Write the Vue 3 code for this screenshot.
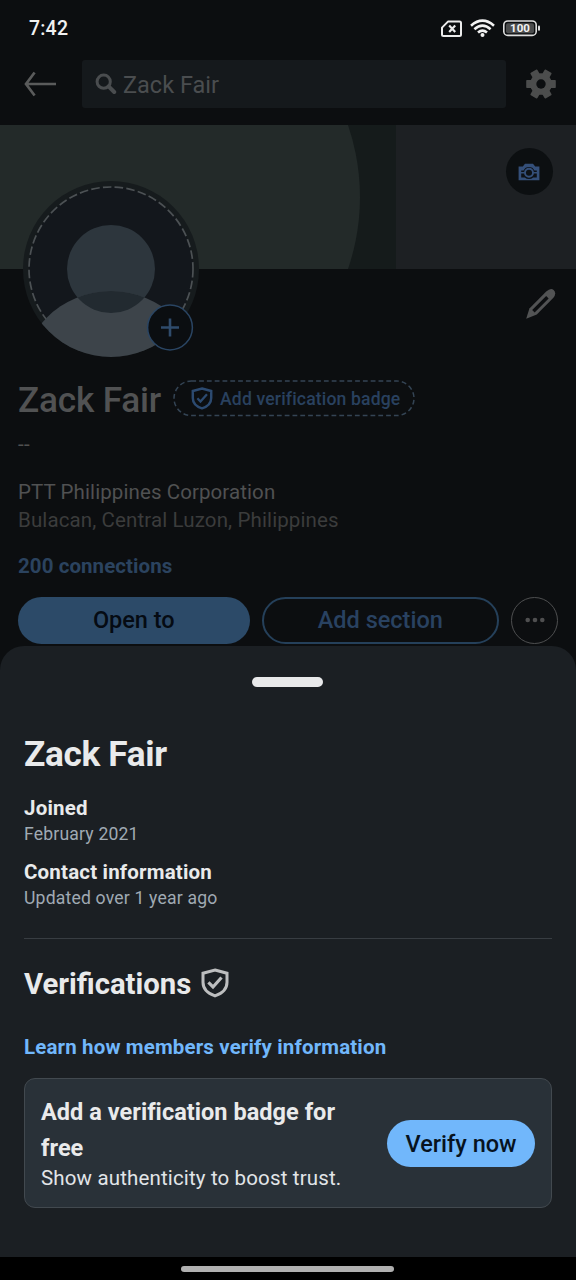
<script setup>
const facts = [
  { label: 'Joined', value: 'February 2021', key: 'joined' },
  { label: 'Contact information', value: 'Updated over 1 year ago', key: 'contact' },
]
const teeth = [0, 60, 120]
</script>

<template>
  <div class="screen">
    <div class="status">
      <span class="clock">7:42</span>
      <svg class="status-icons" width="102" height="22" viewBox="0 0 102 22" fill="none">
        <path d="M8.2 4.4H19.5Q21 4.4 21 5.9V17.5Q21 19 19.5 19H3.5Q2 19 2 17.5V10.6Z" stroke="#ececec" stroke-width="2" stroke-linejoin="round" />
        <path d="M9.2 8.6L15.2 15M15.2 8.6L9.2 15" stroke="#ececec" stroke-width="2.2" />
        <g stroke="#f2f2f2" stroke-width="2.6">
          <path d="M31 8.7Q42.5 -1.3 54 8.7" />
          <path d="M34.4 12.2Q42.5 5.2 50.6 12.2" />
          <path d="M38 15.5Q42.5 11.6 47 15.5" />
        </g>
        <circle cx="42.5" cy="18" r="2" fill="#f2f2f2" />
        <rect x="63.8" y="4" width="32.4" height="14.4" rx="4" stroke="#dedede" stroke-width="1.6" />
        <rect x="66" y="6.2" width="28" height="10" rx="2" fill="#4b4c4d" />
        <rect x="98" y="8.4" width="2" height="5.4" rx="1" fill="#dedede" />
        <text x="80" y="15.4" text-anchor="middle" class="battery">100</text>
      </svg>
    </div>

    <header class="topbar">
      <svg class="back" width="34" height="26" viewBox="0 0 34 26" fill="none" stroke="#5a5b5b" stroke-width="2.7">
        <path d="M33 13H3.2M11.6 1.5L3 13L11.6 24.5" />
      </svg>
      <div class="search">
        <svg width="22" height="22" viewBox="0 0 22 22" fill="none" stroke="#4a4d4f">
          <circle cx="8.7" cy="8.7" r="6.6" stroke-width="3" />
          <path d="M13.6 13.4L19.2 19" stroke-width="4" stroke-linecap="round" />
        </svg>
        <span>Zack Fair</span>
      </div>
      <svg class="gear" width="30" height="30" viewBox="-15 -15 30 30" fill="#4c4d4d">
        <circle r="10.8" />
        <rect v-for="a in teeth" :key="a" x="-14.8" y="-4" width="29.6" height="8" rx=".8" :transform="`rotate(${a})`" />
        <circle r="4.7" fill="#0c0e10" />
      </svg>
    </header>

    <section class="cover">
      <svg class="art" width="576" height="144" viewBox="0 0 576 144">
        <rect width="576" height="144" fill="#1d2023" />
        <rect width="396" height="144" fill="#151b1b" />
        <circle cx="138" cy="72" r="222" fill="#232a29" />
      </svg>
      <div class="camera">
        <svg width="22" height="18" viewBox="0 0 22 18">
          <path fill="#344f79" d="M.6 3.6H4.8L7 .8H15L17.2 3.6H21.4V17.2H.6Z" />
          <path fill="#0d1116" d="M3.2 7.4H5.6A6 6 0 0 1 16.4 7.4H18.8V9H3.2ZM3.2 10.4H18.8V14.4H15.2A6 6 0 0 1 6.8 14.4H3.2Z" />
          <circle cx="11" cy="9.8" r="4" fill="#0d1116" stroke="#344f79" stroke-width="1.9" />
        </svg>
      </div>
      <svg class="avatar" width="178" height="178" viewBox="-89 -89 178 178">
        <defs>
          <clipPath id="disc"><circle r="88" /></clipPath>
          <clipPath id="head"><circle r="44" /></clipPath>
        </defs>
        <circle r="88" fill="#161b1d" />
        <circle r="82" fill="#13171c" stroke="#4c5154" stroke-width="1.7" stroke-dasharray="8.6 3.2" />
        <circle r="44" fill="#2d363d" />
        <circle cy="113" r="91" fill="#3d444a" clip-path="url(#disc)" />
        <circle cy="113" r="91" fill="#222a30" clip-path="url(#head)" />
        <circle cx="59" cy="58.5" r="22.4" fill="#0b0e11" stroke="#2a4563" stroke-width="1.5" />
        <path d="M50 58.5H68M59 49.5V67.5" stroke="#2f4b6b" stroke-width="2.6" />
      </svg>
    </section>

    <main class="profile">
      <svg class="pencil" width="32" height="32" viewBox="0 0 32 32">
        <path fill="#525354" d="M1.2 30.8L4.4 20.4L21.2 3.6Q25.6 -.4 28.6 2Q32 5.2 28.2 10L11.8 26.6Z" />
        <path d="M8.4 23.2L22.4 9.2" stroke="#0c0e10" stroke-width="3.4" />
      </svg>
      <div class="name-row">
        <h1>Zack Fair</h1>
        <div class="badge">
          <svg class="outline" width="242" height="37" viewBox="0 0 242 37" fill="none">
            <rect x="1" y="1" width="240" height="34.6" rx="17.3" stroke="#344454" stroke-width="1.5" stroke-dasharray="4.8 3" />
          </svg>
          <svg width="22" height="23" viewBox="0 0 28 30" fill="none" stroke="#2c4a70">
            <path d="M14 2L26 5.2V14.2Q26 23.8 14 27.8Q2 23.8 2 14.2V5.2Z" stroke-width="3.2" />
            <path d="M8 14.7L12 19L20.5 9.5" stroke-width="3" />
          </svg>
          <span>Add verification badge</span>
        </div>
      </div>
      <p class="headline">--</p>
      <p class="company">PTT Philippines Corporation</p>
      <p class="place">Bulacan, Central Luzon, Philippines</p>
      <p class="connections">200 connections</p>
      <div class="actions">
        <button class="open"><span>Open to</span></button>
        <button class="add"><span>Add section</span></button>
        <button class="more">
          <svg width="20" height="6" viewBox="0 0 20 6" fill="#4f4f50"><circle cx="2.7" cy="3" r="2.3" /><circle cx="10" cy="3" r="2.3" /><circle cx="17.3" cy="3" r="2.3" /></svg>
        </button>
      </div>
    </main>

    <section class="sheet">
      <div class="handle"></div>
      <h2>Zack Fair</h2>
      <dl>
        <div v-for="fact in facts" :key="fact.key" class="fact">
          <dt>{{ fact.label }}</dt>
          <dd>{{ fact.value }}</dd>
        </div>
      </dl>
      <div class="rule"></div>
      <div class="verify-head">
        <h3>Verifications</h3>
        <svg width="28" height="30" viewBox="0 0 28 30" fill="none" stroke="#bdbebf">
          <path d="M14 2L26 5.2V14.2Q26 23.8 14 27.8Q2 23.8 2 14.2V5.2Z" stroke-width="3" />
          <path d="M7.4 14.4L12 19L20.5 9.5" stroke-width="3.2" />
        </svg>
      </div>
      <a class="learn">Learn how members verify information</a>
      <div class="card">
        <div class="copy">
          <h4>Add a verification badge for free</h4>
          <p>Show authenticity to boost trust.</p>
        </div>
        <button class="verify"><span>Verify now</span></button>
      </div>
    </section>
    <div class="nav"><i></i></div>
  </div>
</template>

<style>
body { margin: 0; background: #0c0e10; }
</style>

<style scoped>
.screen { position: relative; width: 576px; height: 1280px; overflow: hidden; background: #0c0e10; font-family: Roboto, "Noto Sans", sans-serif; white-space: nowrap; }
h1, h2, h3, h4, p, dl, dd { margin: 0; }
button { border: 0; margin: 0; padding: 0; font: inherit; box-sizing: border-box; display: flex; align-items: center; justify-content: center; }
svg { display: block; flex: none; }
.status { height: 60px; display: flex; justify-content: space-between; padding: 0 34px 0 29px; box-sizing: border-box; }
.clock { margin-top: 17px; font-size: 19.5px; line-height: 24px; font-weight: 500; letter-spacing: .2px; color: #f1f1f1; }
.status-icons { margin-top: 16.5px; }
.battery { font: 700 11.5px Roboto, sans-serif; fill: #f2f2f2; }
.topbar { height: 65px; display: flex; align-items: flex-start; padding-left: 23px; box-sizing: border-box; }
.back { margin-top: 11px; }
.search { margin-left: 25px; width: 424px; height: 48px; border-radius: 3px; background: #15191c; display: flex; align-items: center; box-sizing: border-box; padding-left: 13px; gap: 6px; color: #4a4d4f; font-size: 23.5px; line-height: 48px; }
.search span { padding-top: 1px; }
.gear { margin: 9px 0 0 20px; }
.cover { position: relative; height: 144px; }
.camera { position: absolute; left: 505.5px; top: 23px; width: 47px; height: 47px; border-radius: 50%; background: #0c0f11; display: flex; align-items: center; justify-content: center; }
.avatar { position: absolute; left: 22px; top: 55px; }
.profile { padding: 19px 18px 0; }
.pencil { margin: 0 0 0 507px; }
.name-row { display: flex; align-items: center; margin-top: 58px; height: 44px; }
h1 { font-size: 35.2px; line-height: 44px; font-weight: 500; color: #515253; width: 155px; letter-spacing: -.2px; }
.badge { position: relative; width: 242px; height: 37px; display: flex; align-items: center; box-sizing: border-box; padding-left: 18px; gap: 7px; color: #29415f; font-size: 17.6px; font-weight: 500; letter-spacing: .15px; top: -2px; }
.badge span { padding-top: 2px; }
.outline { position: absolute; left: 0; top: 0; }
.headline { margin-top: 7px; font-size: 20.5px; line-height: 30px; color: #505050; letter-spacing: .3px; }
.company { margin-top: 19px; font-size: 20.5px; line-height: 28px; letter-spacing: .09px; color: #505152; }
.place { font-size: 20.5px; line-height: 28px; letter-spacing: .12px; color: #3b3c3c; }
.connections { margin-top: 18px; font-size: 20.5px; line-height: 28px; font-weight: 700; letter-spacing: .07px; color: #2b435f; }
.actions { display: flex; margin-top: 16.5px; height: 47px; }
.actions button { height: 47px; border-radius: 24px; font-size: 23.5px; font-weight: 500; }
.actions .open { width: 232px; background: #2c4a68; color: #050b13; }
.actions .add { width: 238px; margin-left: 12px; background: none; border: 2px solid #25405a; color: #294261; }
.actions .more { width: 47px; margin-left: 12px; background: none; border: 1.5px solid #4e4f50; }
.sheet { position: absolute; left: 0; right: 0; top: 646px; height: 611px; border-radius: 24px 24px 0 0; background: #1b1f23; padding: 31px 24px 0; box-sizing: border-box; color: #e9eaeb; }
.handle { width: 71px; height: 10px; border-radius: 5px; background: #e8e9ea; margin: 0 auto; position: relative; left: -.5px; }
h2 { margin-top: 45px; font-size: 35.2px; line-height: 44px; font-weight: 700; letter-spacing: -.35px; }
dl { margin-top: 18px; }
.fact { height: 64px; }
dt { font-size: 20.5px; line-height: 28px; font-weight: 700; letter-spacing: .18px; }
dd { font-size: 17.6px; line-height: 24px; letter-spacing: .18px; color: #a0aab3; }
.rule { height: 1px; background: #383d42; margin-top: 16px; }
.verify-head { display: flex; align-items: center; margin-top: 26px; height: 38px; gap: 10px; }
.verify-head svg { position: relative; top: -1px; }
h3 { font-size: 29.3px; line-height: 38px; font-weight: 700; }
.learn { display: block; margin-top: 29px; font-size: 20.5px; line-height: 30px; font-weight: 700; letter-spacing: .14px; color: #71b7fb; }
.card { margin-top: 16px; height: 130px; border: 1px solid #42494f; border-radius: 11px; background: #293138; box-sizing: border-box; display: flex; justify-content: space-between; align-items: center; padding: 0 16px; }
.copy { width: 320px; padding-bottom: 2px; }
h4 { font-size: 23.5px; line-height: 36px; font-weight: 700; white-space: normal; width: 310px; letter-spacing: .04px; }
.copy p { font-size: 20.5px; line-height: 24px; letter-spacing: .15px; color: #e2e5e8; }
.verify { width: 148px; height: 47px; border-radius: 24px; background: #71b7fb; color: #07131f; font-size: 23.5px; font-weight: 500; }
.verify span { padding-top: 1px; }
.nav { position: absolute; left: 0; right: 0; bottom: 0; height: 23px; background: #000; display: flex; justify-content: center; }
.nav i { width: 213px; height: 6px; border-radius: 3px; background: #b0b0b0; margin: 9px 1px 0 0; }
</style>
